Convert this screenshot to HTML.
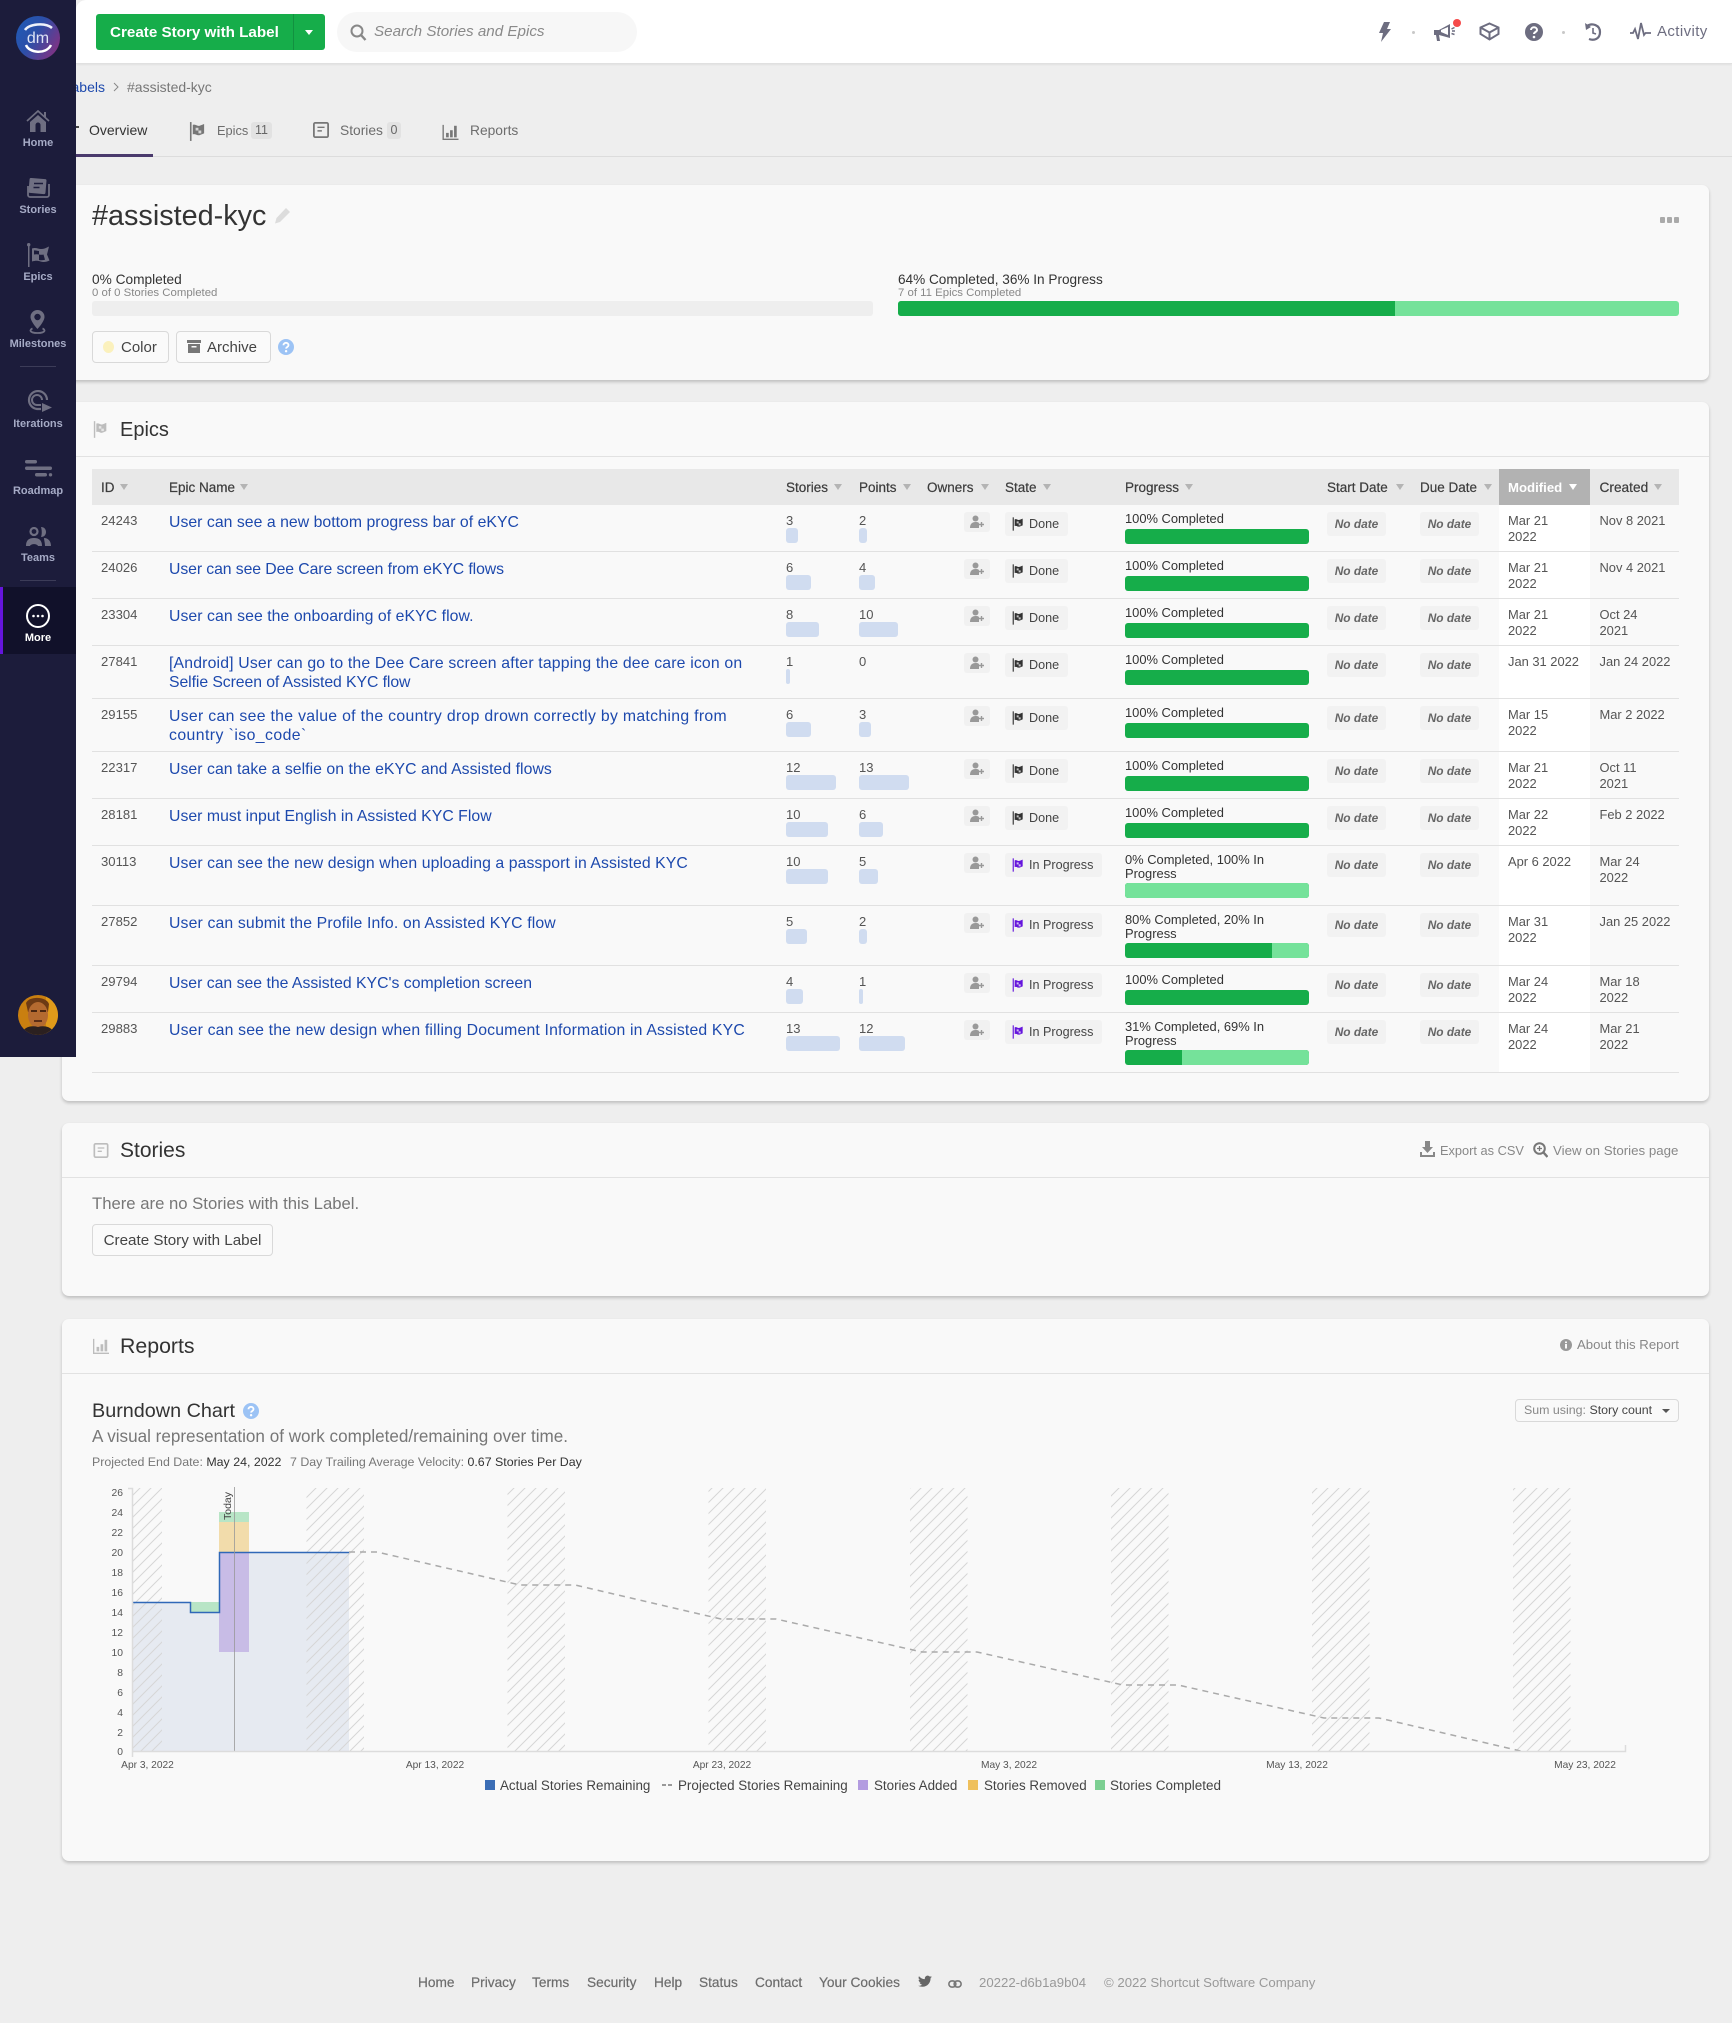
<!DOCTYPE html>
<html lang="en"><head><meta charset="utf-8"><title>#assisted-kyc</title>
<style>
*{box-sizing:border-box}
html,body{margin:0;padding:0}
body{width:1732px;height:2023px;background:#eeeeee;position:relative;overflow:hidden;font-family:"Liberation Sans",sans-serif;color:#333}
.a{position:absolute;white-space:nowrap}
#top{position:absolute;left:76px;top:0;width:1656px;height:64px;background:#fff;border-bottom:1px solid #e0e0e0;border-top-left-radius:10px;box-shadow:0 1px 2px rgba(0,0,0,.06)}
#side{position:absolute;left:0;top:0;width:76px;height:1057px;background:#1c1c3b;z-index:5}
#side .l{position:absolute;left:0;width:76px;text-align:center;font-size:11px;font-weight:bold;color:#a6abc6;line-height:14px}
#side svg{position:absolute;color:#6f6f82}
.card{position:absolute;left:62px;width:1647px;background:#f9f9f9;border-radius:7px;box-shadow:0 2px 3px rgba(0,0,0,.2)}
.hr{position:absolute;left:0;right:0;height:1px;background:#e2e2e2}
.h2{position:absolute;left:120px;font-size:20px;line-height:26px;color:#333;white-space:nowrap}
.tab{position:absolute;top:122px;line-height:17px;font-size:13.8px;color:#6d6d6d;white-space:nowrap}
.badge{position:absolute;top:122px;height:17px;line-height:17px;background:#e2e2e2;border-radius:3px;font-size:12.5px;color:#666;text-align:center}
.btn{position:absolute;background:#fafafa;border:1px solid #d9d9d9;border-radius:4px;font-size:15px;color:#444;white-space:nowrap}
.th{position:absolute;top:470px;line-height:36px;font-size:13.5px;color:#3c3c3c;white-space:nowrap;z-index:2;-webkit-text-stroke:.2px #3c3c3c}
.c{position:absolute;top:484px;width:0;height:0;border-left:4px solid transparent;border-right:4px solid transparent;border-top:6px solid #b4b4b4;z-index:2}
.r{position:absolute;left:92px;width:1587px;border-bottom:1px solid #e1e1e1}
.r>*{position:absolute;white-space:nowrap}
.id{left:9px;top:8px;line-height:16px;font-size:13.1px;color:#555}
.t{left:77px;top:8px;line-height:19px;font-size:15.8px;color:#1d49ad}
.s{left:694px;top:8px;line-height:16px;font-size:13px;color:#555}
.p{left:767px;top:8px;line-height:16px;font-size:13px;color:#555}
.sb{left:694px;top:23px;height:15px;background:#d0dcf0;border-radius:3px}
.pb{left:767px;top:23px;height:15px;background:#d0dcf0;border-radius:3px}
.o{left:872px;top:7px;width:26px;height:20px;background:#f1f1f1;border-radius:3px;color:#999}
.o svg{position:absolute;left:6px;top:3px}
.st{left:913px;top:7px;height:24px;width:63px;background:#f2f2f2;border-radius:3px;font-size:12.6px;line-height:24px;padding-left:24px;color:#444}
.st.ip{width:97px}
.st svg{position:absolute;left:7px;top:5px;color:#333}
.st.ip svg{color:#6515dd}
.pt{left:1033px;top:7px;line-height:13.5px;font-size:12.9px;color:#333}
.pg{left:1033px;top:24px;width:184px;height:15px;background:#16ad4a;border-radius:3px;overflow:hidden}
.pg.two{top:37px}
.pg i{position:absolute;top:0;bottom:0;right:0;background:#75e29a}
.d{top:7px;height:24px;line-height:24px;background:#f2f2f2;border-radius:3px;font-size:11.9px;font-weight:bold;font-style:italic;color:#666;text-align:center}
.sd{left:1235px;width:59px}
.dd{left:1328px;width:59px}
.m{left:1416px;top:8px;line-height:16px;font-size:12.9px;color:#555}
.cr{left:1507.5px;top:8px;line-height:16px;font-size:12.9px;color:#555}
.g{position:absolute;top:1975px;line-height:16px;font-size:13.7px;color:#6d6d6d;white-space:nowrap;-webkit-text-stroke:.2px #6d6d6d}
.lg{position:absolute;top:1778px;line-height:16px;font-size:13.4px;color:#444;white-space:nowrap}
.sq{position:absolute;top:1780px;width:10px;height:10px}
</style></head>
<body>
<svg width="0" height="0" style="position:absolute">
<defs>
<symbol id="flag" viewBox="0 0 18 20"><rect x="1" y="0" width="1.7" height="20" fill="currentColor"/><path fill="currentColor" d="M4 3c3-1 4 1 6 1s3-1 6-2v10c-3 1-4 2-6 2s-3-2-6-1z"/><path fill="#f4f4f4" d="M7 6h3v3H7zM10 9h3v3h-3z" opacity=".75"/></symbol>
<symbol id="doc" viewBox="0 0 18 18"><rect x="1" y="1" width="16" height="16" rx="1.5" fill="none" stroke="currentColor" stroke-width="2"/><path d="M5 6h8M5 10h5" stroke="currentColor" stroke-width="1.6"/></symbol>
<symbol id="bars" viewBox="0 0 18 18"><path fill="currentColor" d="M0 1h1.5v15.5H18V18H0z"/><rect x="4" y="10" width="3" height="5"/><rect x="8.5" y="7" width="3" height="8"/><rect x="13" y="2" width="3" height="13"/></symbol>
<symbol id="ow" viewBox="0 0 14 14"><circle cx="5.5" cy="3.5" r="3" fill="currentColor"/><path fill="currentColor" d="M0 13c0-4 2-6 5.500-6S9 8 9 9v4z"/><path d="M11.500 7v5M9 9.500h5" stroke="currentColor" stroke-width="1.400"/></symbol>
<symbol id="q" viewBox="0 0 16 16"><circle cx="8" cy="8" r="8" fill="#9cc3f5"/><path d="M5.500 6.200c0-3.200 5-3.200 5 0 0 1.800-2.400 1.800-2.400 3.400" fill="none" stroke="#fff" stroke-width="1.800"/><circle cx="8.100" cy="12.200" r="1.200" fill="#fff"/></symbol>
<pattern id="hatch" patternUnits="userSpaceOnUse" width="11" height="11"><path d="M-1 1L1 -1M0 11L11 0M10 12L12 10" stroke="#d6d6d6" stroke-width="1" fill="none"/></pattern>
<linearGradient id="lg" x1="0" y1="0" x2="1" y2=".6"><stop offset="0" stop-color="#1f5cb8"/><stop offset=".5" stop-color="#2c4fa8"/><stop offset="1" stop-color="#7a3486"/></linearGradient>
</defs>
</svg>

<!-- Top bar -->
<div id="top"></div>
<div class="a" style="left:96px;top:14px;width:229px;height:36px;background:#16ad4a;border-radius:3px"></div>
<div class="a" style="left:293px;top:14px;width:1px;height:36px;background:#129140"></div>
<div class="a" style="left:110px;top:15px;line-height:36px;font-size:15.200px;font-weight:bold;color:#fff">Create Story with Label</div>
<div class="a" style="left:305px;top:30px;width:0;height:0;border-left:4.500px solid transparent;border-right:4.500px solid transparent;border-top:5px solid #fff"></div>
<div class="a" style="left:337px;top:12px;width:300px;height:40px;background:#f7f7f7;border-radius:20px"></div>
<svg class="a" style="left:350px;top:24px" width="17" height="17" viewBox="0 0 17 17"><circle cx="7" cy="7" r="5.500" fill="none" stroke="#888" stroke-width="2"/><path d="M11 11l4.500 5" stroke="#888" stroke-width="2.400"/></svg>
<div class="a" style="left:374px;top:22px;line-height:19px;font-size:15.200px;font-style:italic;color:#8a8a8a">Search Stories and Epics</div>

<!-- top right icons -->
<svg class="a" style="left:1378px;top:22px" width="13" height="20" viewBox="0 0 13 20"><path fill="#6d6d80" d="M6 0h6L9 7h4L3 20l2-9H1z"/></svg>
<div class="a" style="left:1412px;top:31px;width:3px;height:3px;border-radius:2px;background:#c8c8c8"></div>
<svg class="a" style="left:1434px;top:23px" width="22" height="20" viewBox="0 0 22 20"><path fill="#6d6d80" d="M0 7h5l11-6v14L5 12l1 6H3l-1-6H0z"/><path fill="#fff" d="M7 7l7-3v8l-7-3z"/><path d="M17.500 6l3-1.500M18 8h3M17.500 10.500l3 1" stroke="#6d6d80" stroke-width="1.500"/></svg>
<div class="a" style="left:1453px;top:19px;width:8px;height:8px;border-radius:50%;background:#f54a4a"></div>
<svg class="a" style="left:1478px;top:22px" width="23" height="19" viewBox="0 0 23 19"><path fill="none" stroke="#6d6d80" stroke-width="2" d="M11.500 1.500L20.500 5.500V12l-9 5.500L2.500 12V5.500zM2.500 5.500l9 5 9-5M11.500 10.500V17"/></svg>
<svg class="a" style="left:1525px;top:23px" width="18" height="18" viewBox="0 0 18 18"><circle cx="9" cy="9" r="9" fill="#6d6d80"/><path d="M6 7c0-3.600 6-3.600 6 0 0 2-3 2-3 4" fill="none" stroke="#fff" stroke-width="2"/><circle cx="9" cy="14" r="1.300" fill="#fff"/></svg>
<div class="a" style="left:1562px;top:31px;width:3px;height:3px;border-radius:2px;background:#c8c8c8"></div>
<svg class="a" style="left:1584px;top:23px" width="19" height="18" viewBox="0 0 19 18"><path fill="none" stroke="#6d6d80" stroke-width="2.200" d="M3 3c5-3.500 13-1 13 6s-6 9-11 7"/><path fill="#6d6d80" d="M1 0l1 7 5-3z"/><path d="M9 5v5l3 1" fill="none" stroke="#6d6d80" stroke-width="1.600"/></svg>
<svg class="a" style="left:1630px;top:22px" width="21" height="19" viewBox="0 0 21 19"><path fill="none" stroke="#6d6d80" stroke-width="1.800" d="M0 11h3l2-4 3 10 3-16 3 12 1.500-2H21"/></svg>
<div class="a" style="left:1657px;top:23px;line-height:18px;font-size:15px;letter-spacing:.4px;color:#6d6d80">Activity</div>

<!-- breadcrumb -->
<div class="a" style="right:1627px;top:78px;line-height:18px;font-size:14px;color:#1d49ad">Labels</div>
<svg class="a" style="left:113px;top:82px" width="6" height="10" viewBox="0 0 6 10"><path d="M1 1l4 4-4 4" fill="none" stroke="#888" stroke-width="1"/></svg>
<div class="a" style="left:127px;top:78px;line-height:18px;font-size:14px;color:#777">#assisted-kyc</div>

<!-- tabs -->
<div class="a" style="left:76px;top:156px;width:1656px;height:1px;background:#dcdcdc"></div>
<div class="a" style="left:76px;top:154px;width:77px;height:3px;background:#4a3a6c"></div>
<div class="a" style="left:76px;top:126px;width:3px;height:2px;background:#444"></div>
<div class="tab" style="left:89px;color:#333;font-size:14px">Overview</div>
<svg class="a" style="left:189px;top:122px;color:#777" width="17" height="19"><use href="#flag"/></svg>
<div class="tab" style="left:217px;font-size:12.800px">Epics</div>
<div class="badge" style="left:251px;width:21px">11</div>
<svg class="a" style="left:312px;top:122px;color:#777" width="18" height="16"><use href="#doc"/></svg>
<div class="tab" style="left:340px">Stories</div>
<div class="badge" style="left:387px;width:14px">0</div>
<svg class="a" style="left:442px;top:124px;color:#777;fill:#777" width="17" height="16"><use href="#bars"/></svg>
<div class="tab" style="left:470px">Reports</div>

<!-- Card 1 -->
<div class="card" style="top:185px;height:195px"></div>
<div class="a" style="left:92px;top:197px;line-height:38px;font-size:28.800px;color:#333">#assisted-kyc</div>
<svg class="a" style="left:274px;top:207px" width="17" height="17" viewBox="0 0 17 17"><path fill="#dcdcdc" d="M12 1l4 4L6 15l-5 1.500L2.500 11z"/></svg>
<div class="a" style="left:1660px;top:217px;width:5px;height:6px;background:#aaa;box-shadow:7px 0 0 #aaa,14px 0 0 #aaa;border-radius:1px"></div>
<div class="a" style="left:92px;top:272px;line-height:16px;font-size:13.700px;color:#333">0% Completed</div>
<div class="a" style="left:92px;top:286px;line-height:14px;font-size:11.400px;color:#888">0 of 0 Stories Completed</div>
<div class="a" style="left:92px;top:301px;width:781px;height:15px;background:#eeeeee;border-radius:3px"></div>
<div class="a" style="left:898px;top:272px;line-height:16px;font-size:13.600px;color:#333">64% Completed, 36% In Progress</div>
<div class="a" style="left:898px;top:286px;line-height:14px;font-size:11.400px;color:#888">7 of 11 Epics Completed</div>
<div class="a" style="left:898px;top:301px;width:781px;height:15px;background:#75e29a;border-radius:3px"></div>
<div class="a" style="left:898px;top:301px;width:497px;height:15px;background:#16ad4a;border-radius:3px 0 0 3px"></div>
<div class="btn" style="left:92px;top:331px;width:77px;height:32px;line-height:31px;padding-left:28px">Color</div>
<div class="a" style="left:103px;top:341px;width:11px;height:12px;border-radius:50%;background:#fbf1bd"></div>
<div class="btn" style="left:176px;top:331px;width:95px;height:32px;line-height:31px;padding-left:30px">Archive</div>
<svg class="a" style="left:187px;top:340px" width="14" height="13" viewBox="0 0 14 13"><path fill="#777" d="M0 0h14v3H0zM1 4h12v9H1z"/><rect x="4.500" y="6" width="5" height="1.500" fill="#fafafa"/></svg>
<svg class="a" style="left:278px;top:339px" width="16" height="16"><use href="#q"/></svg>

<!-- Card 2 Epics -->
<div class="card" style="top:402px;height:699px"><div class="hr" style="top:54px"></div></div>
<svg class="a" style="left:93px;top:421px;color:#bdbdbd" width="15" height="17"><use href="#flag"/></svg>
<div class="h2" style="top:417px">Epics</div>
<div class="a" style="left:92px;top:469px;width:1587px;height:36px;background:#e8e8e8"></div>
<div class="a" style="left:1499px;top:469px;width:91px;height:36px;background:#b2b2b2;z-index:1"></div>
<div class="a" style="left:1499px;top:505px;width:91px;height:567px;background:#fff"></div>
<div class="th" style="left:101px">ID</div><div class="c" style="left:120px"></div>
<div class="th" style="left:169px">Epic Name</div><div class="c" style="left:240px"></div>
<div class="th" style="left:786px">Stories</div><div class="c" style="left:834px"></div>
<div class="th" style="left:859px">Points</div><div class="c" style="left:903px"></div>
<div class="th" style="left:927px">Owners</div><div class="c" style="left:981px"></div>
<div class="th" style="left:1005px">State</div><div class="c" style="left:1043px"></div>
<div class="th" style="left:1125px">Progress</div><div class="c" style="left:1185px"></div>
<div class="th" style="left:1327px">Start Date</div><div class="c" style="left:1396px"></div>
<div class="th" style="left:1420px">Due Date</div><div class="c" style="left:1484px"></div>
<div class="th" style="left:1508px;color:#fff;font-weight:bold;font-size:13.200px;-webkit-text-stroke:0">Modified</div><div class="c" style="left:1569px;border-top-color:#fff"></div>
<div class="th" style="left:1599.500px;font-size:13.700px">Created</div><div class="c" style="left:1654px"></div>

<div class="r" style="top:505px;height:47px"><span class="id">24243</span><span class="t" style="letter-spacing:.03px">User can see a new bottom progress bar of eKYC</span><span class="s">3</span><span class="sb" style="width:12px"></span><span class="p">2</span><span class="pb" style="width:8px"></span><span class="o"><svg width="14" height="14"><use href="#ow"/></svg></span><span class="st"><svg width="12" height="14"><use href="#flag"/></svg>Done</span><span class="pt">100% Completed</span><span class="pg"></span><span class="d sd">No date</span><span class="d dd">No date</span><span class="m">Mar 21<br>2022</span><span class="cr">Nov 8 2021</span></div>
<div class="r" style="top:552px;height:47px"><span class="id">24026</span><span class="t" style="letter-spacing:-.09px">User can see Dee Care screen from eKYC flows</span><span class="s">6</span><span class="sb" style="width:25px"></span><span class="p">4</span><span class="pb" style="width:16px"></span><span class="o"><svg width="14" height="14"><use href="#ow"/></svg></span><span class="st"><svg width="12" height="14"><use href="#flag"/></svg>Done</span><span class="pt">100% Completed</span><span class="pg"></span><span class="d sd">No date</span><span class="d dd">No date</span><span class="m">Mar 21<br>2022</span><span class="cr">Nov 4 2021</span></div>
<div class="r" style="top:599px;height:47px"><span class="id">23304</span><span class="t" style="letter-spacing:.06px">User can see the onboarding of eKYC flow.</span><span class="s">8</span><span class="sb" style="width:33px"></span><span class="p">10</span><span class="pb" style="width:39px"></span><span class="o"><svg width="14" height="14"><use href="#ow"/></svg></span><span class="st"><svg width="12" height="14"><use href="#flag"/></svg>Done</span><span class="pt">100% Completed</span><span class="pg"></span><span class="d sd">No date</span><span class="d dd">No date</span><span class="m">Mar 21<br>2022</span><span class="cr">Oct 24<br>2021</span></div>
<div class="r" style="top:646px;height:53px"><span class="id">27841</span><span class="t"><span style="letter-spacing:.165px">[Android] User can go to the Dee Care screen after tapping the dee care icon on</span><br><span style="letter-spacing:-.08px">Selfie Screen of Assisted KYC flow</span></span><span class="s">1</span><span class="sb" style="width:4px"></span><span class="p">0</span><span class="o"><svg width="14" height="14"><use href="#ow"/></svg></span><span class="st"><svg width="12" height="14"><use href="#flag"/></svg>Done</span><span class="pt">100% Completed</span><span class="pg"></span><span class="d sd">No date</span><span class="d dd">No date</span><span class="m">Jan 31 2022</span><span class="cr">Jan 24 2022</span></div>
<div class="r" style="top:699px;height:53px"><span class="id">29155</span><span class="t"><span style="letter-spacing:.31px">User can see the value of the country drop drown correctly by matching from</span><br><span style="letter-spacing:.43px">country `iso_code`</span></span><span class="s">6</span><span class="sb" style="width:25px"></span><span class="p">3</span><span class="pb" style="width:12px"></span><span class="o"><svg width="14" height="14"><use href="#ow"/></svg></span><span class="st"><svg width="12" height="14"><use href="#flag"/></svg>Done</span><span class="pt">100% Completed</span><span class="pg"></span><span class="d sd">No date</span><span class="d dd">No date</span><span class="m">Mar 15<br>2022</span><span class="cr">Mar 2 2022</span></div>
<div class="r" style="top:752px;height:47px"><span class="id">22317</span><span class="t" style="letter-spacing:.05px">User can take a selfie on the eKYC and Assisted flows</span><span class="s">12</span><span class="sb" style="width:50px"></span><span class="p">13</span><span class="pb" style="width:50px"></span><span class="o"><svg width="14" height="14"><use href="#ow"/></svg></span><span class="st"><svg width="12" height="14"><use href="#flag"/></svg>Done</span><span class="pt">100% Completed</span><span class="pg"></span><span class="d sd">No date</span><span class="d dd">No date</span><span class="m">Mar 21<br>2022</span><span class="cr">Oct 11<br>2021</span></div>
<div class="r" style="top:799px;height:47px"><span class="id">28181</span><span class="t" style="letter-spacing:.03px">User must input English in Assisted KYC Flow</span><span class="s">10</span><span class="sb" style="width:42px"></span><span class="p">6</span><span class="pb" style="width:24px"></span><span class="o"><svg width="14" height="14"><use href="#ow"/></svg></span><span class="st"><svg width="12" height="14"><use href="#flag"/></svg>Done</span><span class="pt">100% Completed</span><span class="pg"></span><span class="d sd">No date</span><span class="d dd">No date</span><span class="m">Mar 22<br>2022</span><span class="cr">Feb 2 2022</span></div>
<div class="r" style="top:846px;height:60px"><span class="id">30113</span><span class="t" style="letter-spacing:.075px">User can see the new design when uploading a passport in Assisted KYC</span><span class="s">10</span><span class="sb" style="width:42px"></span><span class="p">5</span><span class="pb" style="width:19px"></span><span class="o"><svg width="14" height="14"><use href="#ow"/></svg></span><span class="st ip"><svg width="12" height="14"><use href="#flag"/></svg>In Progress</span><span class="pt">0% Completed, 100% In<br>Progress</span><span class="pg two"><i style="left:0"></i></span><span class="d sd">No date</span><span class="d dd">No date</span><span class="m">Apr 6 2022</span><span class="cr">Mar 24<br>2022</span></div>
<div class="r" style="top:906px;height:60px"><span class="id">27852</span><span class="t" style="letter-spacing:.14px">User can submit the Profile Info. on Assisted KYC flow</span><span class="s">5</span><span class="sb" style="width:21px"></span><span class="p">2</span><span class="pb" style="width:8px"></span><span class="o"><svg width="14" height="14"><use href="#ow"/></svg></span><span class="st ip"><svg width="12" height="14"><use href="#flag"/></svg>In Progress</span><span class="pt">80% Completed, 20% In<br>Progress</span><span class="pg two"><i style="left:147px"></i></span><span class="d sd">No date</span><span class="d dd">No date</span><span class="m">Mar 31<br>2022</span><span class="cr">Jan 25 2022</span></div>
<div class="r" style="top:966px;height:47px"><span class="id">29794</span><span class="t">User can see the Assisted KYC's completion screen</span><span class="s">4</span><span class="sb" style="width:17px"></span><span class="p">1</span><span class="pb" style="width:4px"></span><span class="o"><svg width="14" height="14"><use href="#ow"/></svg></span><span class="st ip"><svg width="12" height="14"><use href="#flag"/></svg>In Progress</span><span class="pt">100% Completed</span><span class="pg"></span><span class="d sd">No date</span><span class="d dd">No date</span><span class="m">Mar 24<br>2022</span><span class="cr">Mar 18<br>2022</span></div>
<div class="r" style="top:1013px;height:60px"><span class="id">29883</span><span class="t" style="letter-spacing:.17px">User can see the new design when filling Document Information in Assisted KYC</span><span class="s">13</span><span class="sb" style="width:54px"></span><span class="p">12</span><span class="pb" style="width:46px"></span><span class="o"><svg width="14" height="14"><use href="#ow"/></svg></span><span class="st ip"><svg width="12" height="14"><use href="#flag"/></svg>In Progress</span><span class="pt">31% Completed, 69% In<br>Progress</span><span class="pg two"><i style="left:57px"></i></span><span class="d sd">No date</span><span class="d dd">No date</span><span class="m">Mar 24<br>2022</span><span class="cr">Mar 21<br>2022</span></div>

<!-- Card 3 Stories -->
<div class="card" style="top:1123px;height:173px"><div class="hr" style="top:54px"></div></div>
<svg class="a" style="left:93px;top:1143px;color:#bdbdbd" width="16" height="15"><use href="#doc"/></svg>
<div class="h2" style="top:1138px;font-size:21px">Stories</div>
<svg class="a" style="left:1420px;top:1141px" width="15" height="16" viewBox="0 0 15 16"><path fill="#888" d="M5 0h5v6h3l-5.500 6L2 6h3zM0 11h2v3h11v-3h2v5H0z"/></svg>
<div class="a" style="left:1440px;top:1143px;line-height:16px;font-size:12.800px;color:#888">Export as CSV</div>
<svg class="a" style="left:1533px;top:1142px" width="15" height="16" viewBox="0 0 15 16"><circle cx="6.500" cy="6.500" r="5.300" fill="none" stroke="#777" stroke-width="2"/><path d="M10.500 10.500l4 4.500" stroke="#777" stroke-width="2.400"/><path d="M6.500 4v5M4 6.500h5" stroke="#777" stroke-width="1.300"/></svg>
<div class="a" style="left:1553px;top:1143px;line-height:16px;font-size:13.300px;color:#888">View on Stories page</div>
<div class="a" style="left:92px;top:1194px;line-height:20px;font-size:16.700px;color:#777">There are no Stories with this Label.</div>
<div class="btn" style="left:92px;top:1224px;width:181px;height:32px;line-height:31px;text-align:center;font-size:15.200px">Create Story with Label</div>

<!-- Card 4 Reports -->
<div class="card" style="top:1319px;height:542px"><div class="hr" style="top:54px"></div></div>
<svg class="a" style="left:93px;top:1338px;color:#bdbdbd;fill:#bdbdbd" width="16" height="16"><use href="#bars"/></svg>
<div class="h2" style="top:1333px;font-size:21.300px">Reports</div>
<svg class="a" style="left:1560px;top:1339px" width="12" height="12" viewBox="0 0 12 12"><circle cx="6" cy="6" r="6" fill="#999"/><rect x="5" y="5" width="2" height="4.500" fill="#f9f9f9"/><rect x="5" y="2.500" width="2" height="1.600" fill="#f9f9f9"/></svg>
<div class="a" style="left:1577px;top:1337px;line-height:16px;font-size:13.200px;color:#888">About this Report</div>
<div class="a" style="left:92px;top:1399px;line-height:24px;font-size:19.800px;color:#333">Burndown Chart</div>
<svg class="a" style="left:243px;top:1403px" width="16" height="16"><use href="#q"/></svg>
<div class="a" style="left:92px;top:1427px;line-height:20px;font-size:17.100px;color:#777">A visual representation of work completed/remaining over time.</div>
<div class="a" style="left:92px;top:1454px;line-height:16px;font-size:12.400px;color:#777">Projected End Date: <span style="color:#333">May 24, 2022</span></div>
<div class="a" style="left:290px;top:1454px;line-height:16px;font-size:12.400px;color:#777">7 Day Trailing Average Velocity: <span style="color:#333">0.67 Stories Per Day</span></div>
<div class="btn" style="left:1515px;top:1399px;width:164px;height:23px;line-height:21px;font-size:12.400px;padding-left:8px;color:#888;background:#f9f9f9">Sum using: <span style="color:#444">Story count</span></div>
<div class="a" style="left:1662px;top:1409px;width:0;height:0;border-left:4px solid transparent;border-right:4px solid transparent;border-top:4px solid #555"></div>

<!-- Chart -->
<svg class="a" style="left:0;top:0" width="1732" height="2023" viewBox="0 0 1732 2023">
<rect x="132" y="1602" width="59" height="150" fill="#e6eaf1"/>
<rect x="191" y="1612" width="29" height="140" fill="#e6eaf1"/>
<rect x="219" y="1552" width="130" height="200" fill="#e6eaf1"/>
<g fill="url(#hatch)">
<rect x="132" y="1488" width="30" height="264"/><rect x="306.500" y="1488" width="57.500" height="264"/><rect x="507.500" y="1488" width="57.500" height="264"/><rect x="708.500" y="1488" width="57.500" height="264"/><rect x="910" y="1488" width="57.500" height="264"/><rect x="1111" y="1488" width="57.500" height="264"/><rect x="1312" y="1488" width="57.500" height="264"/><rect x="1513" y="1488" width="57.500" height="264"/>
</g>
<rect x="191" y="1602" width="29" height="10" fill="#b8e5c6"/>
<rect x="219" y="1552" width="30" height="100" fill="#c8bce6"/>
<rect x="219" y="1522" width="30" height="30" fill="#f2dcab"/>
<rect x="219" y="1512" width="30" height="10" fill="#b8e5c6"/>
<path d="M349 1552 H377 L520 1585 H575 L721 1619 H776 L922 1652 H977 L1123 1685 H1178 L1324 1718 H1379 L1525 1752" fill="none" stroke="#aaa" stroke-width="1.500" stroke-dasharray="6 5"/>
<path d="M132.500 1602.500 H190.500 V1612.500 H219.500 V1552.500 H349" fill="none" stroke="#3068b8" stroke-width="1.500"/>
<line x1="234.500" y1="1487" x2="234.500" y2="1752" stroke="#999" stroke-width="1" opacity=".8"/>
<path d="M128 1488.500H132.500V1757M132 1751.500H1625.500V1745" fill="none" stroke="#dcdcdc" stroke-width="1.500"/>
<g font-family="'Liberation Sans',sans-serif" font-size="10.300" fill="#555" text-anchor="end">
<text x="123" y="1496">26</text><text x="123" y="1516">24</text><text x="123" y="1536">22</text><text x="123" y="1556">20</text><text x="123" y="1576">18</text><text x="123" y="1596">16</text><text x="123" y="1616">14</text><text x="123" y="1636">12</text><text x="123" y="1656">10</text><text x="123" y="1676">8</text><text x="123" y="1696">6</text><text x="123" y="1716">4</text><text x="123" y="1736">2</text><text x="123" y="1755">0</text>
</g>
<text transform="translate(231,1520) rotate(-90)" font-family="'Liberation Sans',sans-serif" font-size="10.500" fill="#444">Today</text>
<g font-family="'Liberation Sans',sans-serif" font-size="10.200" fill="#555" text-anchor="middle">
<text x="147.500" y="1768">Apr 3, 2022</text><text x="435" y="1768">Apr 13, 2022</text><text x="722" y="1768">Apr 23, 2022</text><text x="1009" y="1768">May 3, 2022</text><text x="1297" y="1768">May 13, 2022</text><text x="1585" y="1768">May 23, 2022</text>
</g>
</svg>
<div class="sq" style="left:485px;background:#3b6db5"></div><div class="lg" style="left:500px">Actual Stories Remaining</div>
<div class="a" style="left:662px;top:1784px;width:4px;height:2px;background:#999;box-shadow:6px 0 0 #999"></div><div class="lg" style="left:678px">Projected Stories Remaining</div>
<div class="sq" style="left:858px;background:#b39ce0"></div><div class="lg" style="left:874px">Stories Added</div>
<div class="sq" style="left:968px;background:#efc05c"></div><div class="lg" style="left:984px">Stories Removed</div>
<div class="sq" style="left:1095px;background:#7ccf92"></div><div class="lg" style="left:1110px;font-size:13.500px">Stories Completed</div>

<!-- Footer -->
<div class="g" style="left:418px">Home</div><div class="g" style="left:471px">Privacy</div><div class="g" style="left:532px">Terms</div><div class="g" style="left:587px">Security</div><div class="g" style="left:654px">Help</div><div class="g" style="left:699px">Status</div><div class="g" style="left:755px">Contact</div><div class="g" style="left:819px">Your Cookies</div>
<svg class="a" style="left:918px;top:1975px" width="14" height="13" viewBox="0 0 24 20"><path fill="#666" d="M24 2.400c-.9.400-1.800.700-2.800.800 1-.6 1.800-1.600 2.200-2.700-1 .6-2 1-3.100 1.200C19.300.7 18 0 16.600 0c-2.700 0-4.900 2.200-4.900 4.900 0 .4 0 .8.100 1.100C7.700 5.800 4.100 3.900 1.700.9c-.4.700-.7 1.600-.7 2.500 0 1.700.9 3.200 2.200 4.100-.8 0-1.600-.2-2.200-.6v.1c0 2.400 1.700 4.400 3.900 4.800-.4.100-.8.200-1.300.2-.3 0-.6 0-.9-.1.600 2 2.400 3.400 4.600 3.400-1.700 1.300-3.800 2.100-6.100 2.100-.4 0-.8 0-1.200-.1C2.200 18.300 4.800 19 7.500 19c9.100 0 14-7.500 14-14v-.6c1-.7 1.800-1.500 2.500-2z"/></svg>
<svg class="a" style="left:948px;top:1980px" width="14" height="8" viewBox="0 0 16 9"><rect x="1" y="1" width="8" height="7" rx="3.500" fill="none" stroke="#777" stroke-width="1.800"/><rect x="7" y="1" width="8" height="7" rx="3.500" fill="none" stroke="#777" stroke-width="1.800"/></svg>
<div class="g" style="left:979px;color:#999;font-size:13.200px;-webkit-text-stroke:0">20222-d6b1a9b04</div>
<div class="g" style="left:1104px;color:#999;font-size:13.200px;-webkit-text-stroke:0">© 2022 Shortcut Software Company</div>

<!-- Sidebar -->
<div id="side">
<svg style="left:16px;top:16px" width="44" height="44" viewBox="0 0 44 44"><circle cx="22" cy="22" r="22" fill="url(#lg)"/><path d="M9 14c4-6 20-8 27-2" fill="none" stroke="#eef1fa" stroke-width="2.500"/><path d="M10 29c3 8 20 10 25 0" fill="none" stroke="#fff" stroke-width="2.500"/><text x="22" y="27" text-anchor="middle" font-family="'Liberation Sans',sans-serif" font-size="16" fill="#dfe4f5">dm</text></svg>

<svg style="left:26px;top:110px" width="24" height="22" viewBox="0 0 24 22"><path d="M1 11L12 1l11 10" fill="none" stroke="currentColor" stroke-width="1.700"/><rect x="18" y="2" width="2" height="5" fill="currentColor"/><path fill="currentColor" d="M4 12l8-7 8 7v10h-5.500v-7a2.500 2.500 0 0 0-5 0v7H4z"/></svg>
<div class="l" style="top:136px">Home</div>
<svg style="left:27px;top:178px" width="23" height="20" viewBox="0 0 23 20"><path d="M1 8v9a2 2 0 0 0 2 2h17a2 2 0 0 0 2-2V6" fill="none" stroke="currentColor" stroke-width="1.800"/><rect x="2" y="0.500" width="17" height="15" rx="1.500" fill="currentColor" transform="rotate(5 10 8)"/><path d="M7 5.500h9M6.500 9.500h6" stroke="#1c1c3b" stroke-width="1.500"/></svg>
<div class="l" style="top:203px">Stories</div>
<svg style="left:27px;top:243px" width="23" height="24" viewBox="0 0 23 24"><circle cx="1.700" cy="1.700" r="1.700" fill="currentColor"/><rect x="1" y="1" width="1.500" height="23" fill="currentColor"/><path fill="currentColor" fill-rule="evenodd" d="M5 5.500c4-1.500 6 .5 9 .5s5-1 8-2.500l-2 8 2.500 6c-3 1.500-6 2-9 1s-5-1-8.500 0zM7 7.500v4c2-.5 3.500-.3 5 0V8c-2 0-3.500-.8-5-.5zM12 11.500v5.500c2 .5 4 .3 6-.3L16.500 11.500c-1.500.5-3 .3-4.500 0z"/></svg>
<div class="l" style="top:270px">Epics</div>
<svg style="left:29px;top:310px" width="17" height="24" viewBox="0 0 17 24"><path fill="currentColor" fill-rule="evenodd" d="M8.500 0a7 7 0 0 1 7 7c0 4.500-7 12-7 12S1.500 11.500 1.500 7a7 7 0 0 1 7-7zm0 3.800a3.200 3.200 0 1 0 0 6.400 3.200 3.200 0 0 0 0-6.400z"/><path d="M3.500 18.500c-3 1-3.500 4.500 5 4.500s8-3.500 5-4.500" fill="none" stroke="currentColor" stroke-width="1.800"/></svg>
<div class="l" style="top:337px">Milestones</div>
<div style="position:absolute;left:20px;top:366px;width:36px;height:1px;background:#3c3c58"></div>
<svg style="left:26px;top:390px" width="27" height="23" viewBox="0 0 27 23"><path d="M15 19H11A9 9 0 1 1 21 10" fill="none" stroke="currentColor" stroke-width="2.200"/><path d="M15 15H11A5 5 0 1 1 16 10" fill="none" stroke="currentColor" stroke-width="2"/><path fill="currentColor" d="M16 13l10 4.500L16 22z"/></svg>
<div class="l" style="top:417px">Iterations</div>
<svg style="left:25px;top:460px" width="28" height="17" viewBox="0 0 28 17"><rect x="0" y="0" width="12" height="3.500" rx="1.700" fill="currentColor"/><rect x="0" y="6.500" width="27" height="3.500" rx="1.700" fill="currentColor"/><rect x="10" y="13" width="12" height="3.500" rx="1.700" fill="currentColor"/><circle cx="25.500" cy="14.800" r="1.700" fill="currentColor"/></svg>
<div class="l" style="top:484px">Roadmap</div>
<svg style="left:26px;top:527px" width="25" height="19" viewBox="0 0 25 19"><circle cx="8" cy="4.500" r="3.500" fill="none" stroke="currentColor" stroke-width="2.200"/><path fill="currentColor" d="M0 19c0-6 3-8 8-8s8 2 8 8h-4c-1-2.500-7-2.500-8 0z"/><path fill="currentColor" d="M15 0c3 0 5 2 5 5s-2 5-5 5c1-2.500 1-7 0-10zM18 11c4 0 7 3 7 8h-6c0-3-1-6-1-8z"/></svg>
<div class="l" style="top:551px">Teams</div>
<div style="position:absolute;left:20px;top:580px;width:36px;height:1px;background:#3c3c58"></div>
<div style="position:absolute;left:0;top:587px;width:76px;height:67px;background:#11112a"></div>
<div style="position:absolute;left:0;top:587px;width:3px;height:67px;background:#6515dd"></div>
<svg style="left:26px;top:604px" width="24" height="24" viewBox="0 0 24 24"><circle cx="12" cy="12" r="11" fill="none" stroke="#fff" stroke-width="2"/><circle cx="7.500" cy="12" r="1.300" fill="#fff"/><circle cx="12" cy="12" r="1.300" fill="#fff"/><circle cx="16.500" cy="12" r="1.300" fill="#fff"/></svg>
<div class="l" style="top:631px;color:#fff">More</div>
<svg style="left:18px;top:995px" width="40" height="40" viewBox="0 0 40 40"><clipPath id="av"><circle cx="20" cy="20" r="20"/></clipPath><g clip-path="url(#av)"><rect width="40" height="40" fill="#c97f10"/><rect x="28" width="12" height="40" fill="#e09a1a"/><path d="M8 8c3-7 20-7 23 1l-1 8H10z" fill="#6d3a14"/><ellipse cx="20" cy="20" rx="10" ry="13" fill="#b46a30"/><path d="M13 16h6M22 16h6" stroke="#4a2610" stroke-width="2"/><path d="M16 26h8" stroke="#5d2d16" stroke-width="2"/><path d="M3 40c2-8 10-10 17-8 7-2 15 0 17 8z" fill="#2b2020"/></g></svg>
</div>
</body></html>
